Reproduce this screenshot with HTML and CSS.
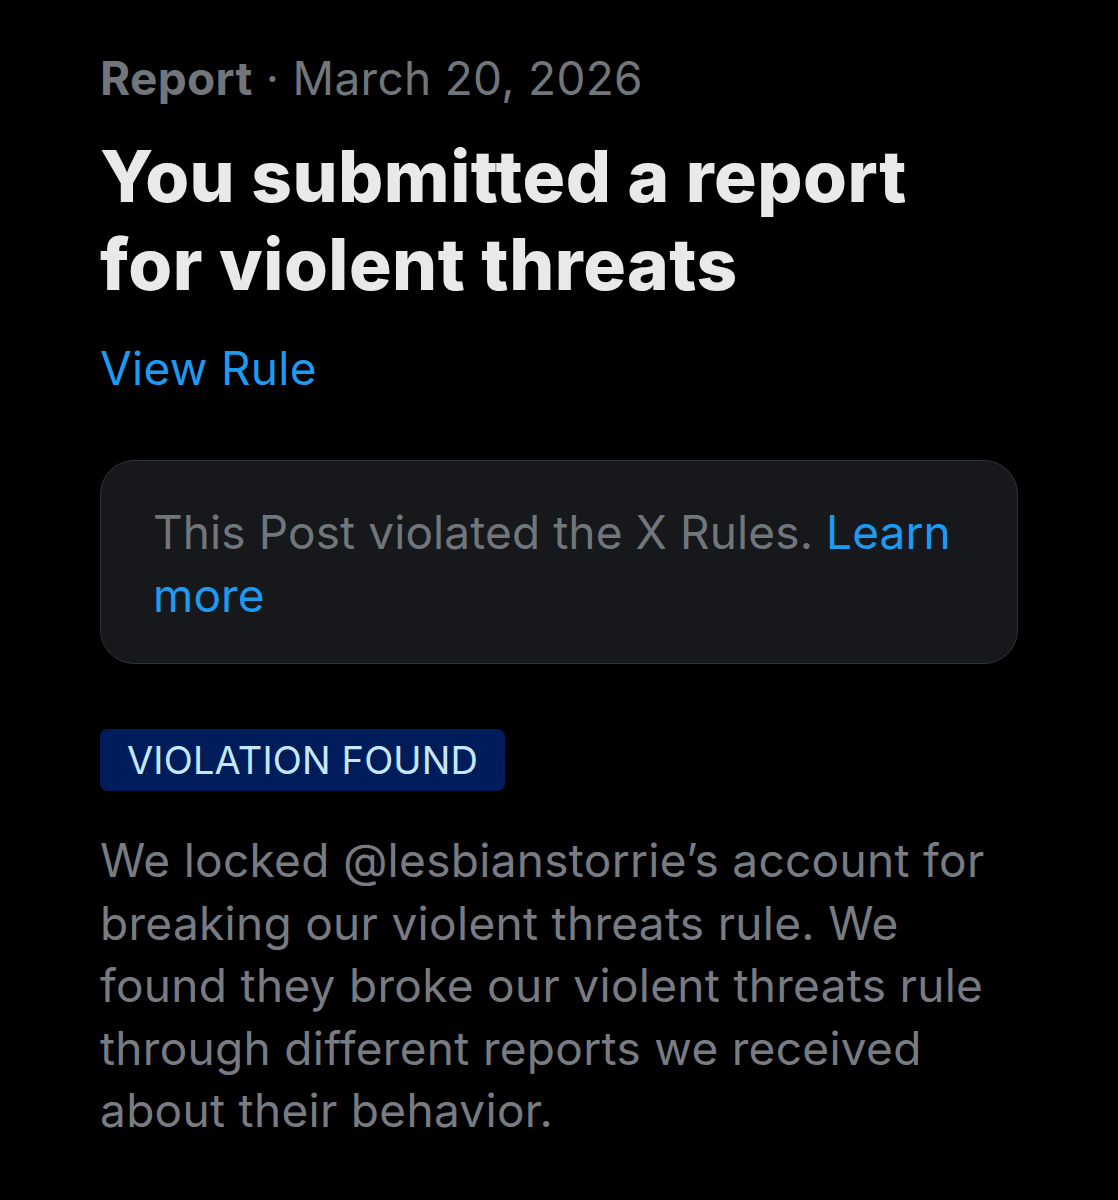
FILE: index.html
```html
<!DOCTYPE html>
<html>
<head>
<meta charset="utf-8">
<link rel="stylesheet" href="styles.css">
</head>
<body>
<main class="page">
  <div class="meta"><span class="meta-strong">Report</span> · March 20, 2026</div>
  <h1 class="title">You submitted a report for violent threats</h1>
  <a class="rule-link">View Rule</a>
  <div class="card">
    <p class="card-text">This Post violated the X Rules. <a class="link">Learn more</a></p>
  </div>
  <div class="badge">VIOLATION FOUND</div>
  <p class="body-text">We locked @lesbianstorrie’s account for breaking our violent threats rule. We found they broke our violent threats rule through different reports we received about their behavior.</p>
</main>
</body>
</html>
```
FILE: styles.css
```css
html, body {
  margin: 0;
  padding: 0;
  background: #000;
}
body {
  font-family: Inter, "Noto Sans", sans-serif;
  -webkit-font-smoothing: antialiased;
}
.page {
  padding: 52px 100px 0 100px;
  display: flex;
  flex-direction: column;
  align-items: flex-start;
}
.meta {
  font-size: 46px;
  line-height: 52px;
  color: #71767b;
  letter-spacing: 0.3px;
}
.meta-strong {
  font-weight: 700;
}
.title {
  margin: 28px 0 0 0;
  font-size: 71px;
  line-height: 88px;
  font-weight: 800;
  color: #e7e9ea;
  letter-spacing: 0.5px;
  max-width: 830px;
}
.rule-link {
  margin-top: 32px;
  font-size: 46px;
  line-height: 56px;
  color: #1d9bf0;
  letter-spacing: 0.3px;
}
.card {
  margin-top: 64px;
  box-sizing: border-box;
  width: 918px;
  background: #16181c;
  border: 1px solid #2f3336;
  border-radius: 34px;
  padding: 40px 52px 36px 52px;
}
.card-text {
  margin: 0;
  font-size: 46px;
  line-height: 63px;
  color: #71767b;
  letter-spacing: 0.1px;
}
.link {
  color: #1d9bf0;
}
.badge {
  margin-top: 65px;
  background: #001c5a;
  color: #c5e8ff;
  border-radius: 8px;
  font-size: 38px;
  line-height: 62px;
  padding: 0 27px;
  letter-spacing: 0.15px;
}
.body-text {
  margin: 38px 0 0 0;
  font-size: 46px;
  line-height: 62.5px;
  color: #787c82;
  letter-spacing: 0.3px;
  width: 905px;
}
```
